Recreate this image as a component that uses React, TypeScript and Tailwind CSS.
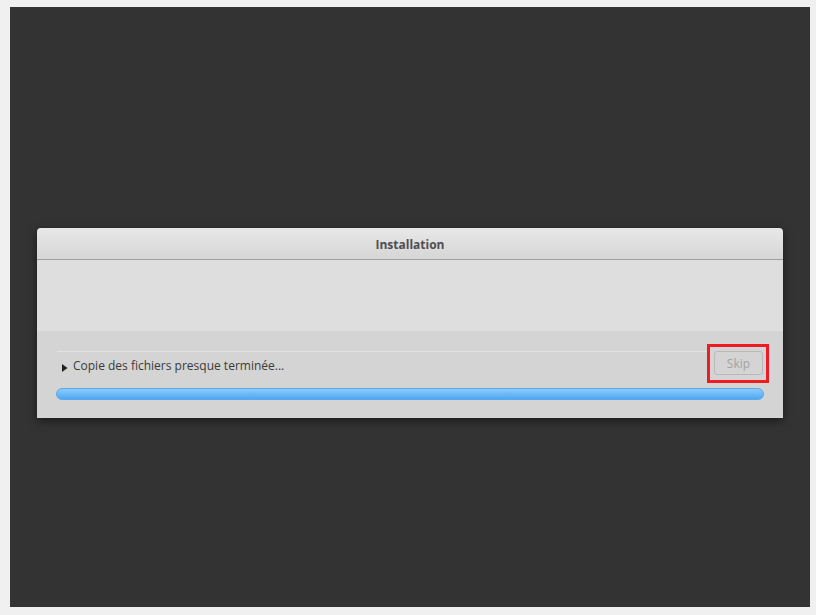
import React from "react";

export default function App() {
  return (
    <div className="w-[816px] h-[615px] bg-[#f0f0f0] pt-[7px] pl-[10px]" style={{ fontFamily: '"Open Sans", sans-serif' }}>
      <div className="w-[800px] h-[600px] bg-[#333333] pt-[221px] pl-[27px]">
        <div className="w-[746px] h-[190px] rounded-t-[4px] overflow-hidden flex flex-col shadow-[0_3px_10px_rgba(0,0,0,0.5)]">
          <div className="h-[32px] bg-gradient-to-b from-[#e8e8e8] to-[#d6d6d6] border-b border-[#a0a0a0] flex items-center justify-center pt-[2px]">
            <span className="text-[12px] font-bold text-[#4e4e4e]">Installation</span>
          </div>
          <div className="h-[71px] bg-[#dedede]" />
          <div className="flex-1 bg-[#d4d4d4] px-[20px] pt-[20px]">
            <div className="flex items-center h-[24px]">
              <div className="flex-1 h-full border-t border-[#e2e2e2] flex items-center pl-[5px] pt-[4px]">
                <svg width="6" height="10" viewBox="0 0 6 10" className="mr-[5px] mt-[5px]">
                  <path d="M0 1 L5.5 5 L0 9 Z" fill="#222" />
                </svg>
                <span className="text-[12px] text-[#3a3a3a]">Copie des fichiers presque terminée...</span>
              </div>
              <div className="relative ml-[7px]">
                <div className="w-[49px] h-[24px] border border-[#b9b9b9] rounded-[3px] flex items-center justify-center text-[12px] text-[#a3a3a3] pt-[1px]">Skip</div>
                <div className="absolute left-[-7px] top-[-7px] w-[62px] h-[39px] border-[3px] border-[#ed1c24]" />
              </div>
            </div>
            <div className="mt-[13px] -mx-[1px] h-[12px] rounded-[6px] bg-gradient-to-b from-[#8ccbff] to-[#4fa7f0] border border-[#5aa9ec]" />
          </div>
        </div>
      </div>
    </div>
  );
}
